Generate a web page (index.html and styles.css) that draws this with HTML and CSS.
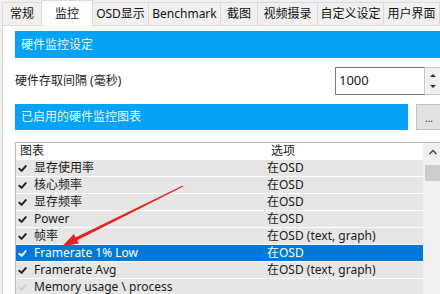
FILE: index.html
```html
<!DOCTYPE html>
<html>
<head>
<meta charset="utf-8">
<link rel="stylesheet" href="styles.css">
</head>
<body>
<div class="win">
  <div class="tabs">
    <div class="tab t1">常规</div>
    <div class="tab sel t2">监控</div>
    <div class="tab t3">OSD显示</div>
    <div class="tab t4">Benchmark</div>
    <div class="tab t5">截图</div>
    <div class="tab t6">视频摄录</div>
    <div class="tab t7">自定义设定</div>
    <div class="tab t8">用户界面</div>
  </div>
  <div class="panel">
    <div class="bar bar1">硬件监控设定</div>
    <div class="row-interval">
      <span class="label">硬件存取间隔 (毫秒)</span>
      <div class="spin">
        <div class="input">1000</div>
        <div class="spinbtns">
          <svg width="10" height="24" viewBox="0 0 10 24"><path d="M2 8 L5 5 L8 8 Z" fill="#333"/><path d="M2 16 L5 19 L8 16 Z" fill="#333"/></svg>
        </div>
      </div>
    </div>
    <div class="row-bar2">
      <div class="bar bar2">已启用的硬件监控图表</div>
      <div class="dots">...</div>
    </div>
    <div class="list">
      <div class="items">
        <div class="hdr"><span class="c1">图表</span><span class="c2">选项</span></div>
        <div class="item"><span class="c1"><svg class="ck" viewBox="0 0 10 10"><path d="M1.5 5.2 L4 7.6 L8.6 2.4" /></svg>显存使用率</span><span class="c2">在OSD</span></div>
        <div class="item"><span class="c1"><svg class="ck" viewBox="0 0 10 10"><path d="M1.5 5.2 L4 7.6 L8.6 2.4" /></svg>核心频率</span><span class="c2">在OSD</span></div>
        <div class="item"><span class="c1"><svg class="ck" viewBox="0 0 10 10"><path d="M1.5 5.2 L4 7.6 L8.6 2.4" /></svg>显存频率</span><span class="c2">在OSD</span></div>
        <div class="item"><span class="c1"><svg class="ck" viewBox="0 0 10 10"><path d="M1.5 5.2 L4 7.6 L8.6 2.4" /></svg>Power</span><span class="c2">在OSD</span></div>
        <div class="item"><span class="c1"><svg class="ck" viewBox="0 0 10 10"><path d="M1.5 5.2 L4 7.6 L8.6 2.4" /></svg>帧率</span><span class="c2">在OSD (text, graph)</span></div>
        <div class="item selrow"><span class="c1"><svg class="ck" viewBox="0 0 10 10"><path d="M1.5 5.2 L4 7.6 L8.6 2.4" /></svg>Framerate 1% Low</span><span class="c2">在OSD</span></div>
        <div class="item"><span class="c1"><svg class="ck" viewBox="0 0 10 10"><path d="M1.5 5.2 L4 7.6 L8.6 2.4" /></svg>Framerate Avg</span><span class="c2">在OSD (text, graph)</span></div>
        <div class="item off"><span class="c1"><svg class="ck" viewBox="0 0 10 10"><path d="M1.5 5.2 L4 7.6 L8.6 2.4" /></svg>Memory usage \ process</span><span class="c2"></span></div>
      </div>
      <div class="scroll">
        <svg class="up" width="10" height="8" viewBox="0 0 10 8"><path d="M1.5 6 L5 2.5 L8.5 6" fill="none" stroke="#444" stroke-width="1.4"/></svg>
        <div class="thumb"></div>
      </div>
    </div>
  </div>
  <svg class="arrow" width="440" height="294" viewBox="0 0 440 294">
    <polygon points="183.3,186.5 77.2,240.3 78.8,243.6 62,246.5 73.9,234.1 75.5,237.4 182.8,185.5" fill="#e3231b"/>
  </svg>
</div>
</body>
</html>
```
FILE: styles.css
```css
html, body {
  margin: 0;
  padding: 0;
}
body {
  width: 440px;
  height: 294px;
  overflow: hidden;
  background: #f0f0f0;
  font-family: "Noto Sans", "Noto Sans CJK SC", sans-serif;
  font-size: 12px;
  color: #1a1a1a;
}
.win {
  position: relative;
  width: 440px;
  height: 294px;
  overflow: hidden;
}
.tabs {
  display: flex;
  height: 25px;
  padding-left: 2px;
  align-items: flex-end;
  background: #f0f0f0;
}
.tab {
  height: 23px;
  line-height: 21px;
  box-sizing: border-box;
  border: 1px solid #dadada;
  border-bottom: none;
  border-left: none;
  background: #f0f0f0;
  text-align: center;
  white-space: nowrap;
  color: #111;
}
.t1 { width: 40px; border-left: 1px solid #dadada; }
.t2 { width: 50px; }
.t3 { width: 56px; }
.t4 { width: 72px; }
.t5 { width: 37px; }
.t6 { width: 60px; }
.t7 { width: 66px; }
.t8 { width: 56px; }
.tab.sel {
  height: 27px;
  line-height: 25px;
  background: #fff;
  margin-bottom: -2px;
  position: relative;
  z-index: 1;
  margin-left: -1px;
  border-left: 1px solid #dadada;
  width: 52px;
}
.panel {
  background: #fff;
  margin-left: 2px;
  border-left: 1px solid #dadada;
  border-top: 1px solid #dadada;
  padding: 5px 0 0 12px;
  height: 300px;
  box-sizing: border-box;
  width: 460px;
}
.bar {
  background: #04a3f6;
  color: #eaf6ff;
  height: 27px;
  line-height: 27px;
  padding-left: 6px;
  box-sizing: border-box;
}
.row-interval {
  display: flex;
  align-items: flex-start;
  margin-top: 9px;
  height: 28px;
}
.label {
  width: 320px;
  padding-top: 4px;
}
.spin {
  display: flex;
  height: 28px;
}
.input {
  width: 90px;
  box-sizing: border-box;
  border: 1px solid #7a7a7a;
  border-right: 1px solid #c8c8c8;
  padding: 3px 0 0 3px;
  font-size: 13px;
  background: #fff;
}
.spinbtns {
  width: 16px;
  border: 1px solid #c8c8c8;
  border-left: none;
  background: #f0f0f0;
  display: flex;
  justify-content: center;
  align-items: center;
}
.row-bar2 {
  display: flex;
  margin-top: 9px;
  height: 26px;
}
.bar2 {
  width: 393px;
  height: 26px;
  line-height: 26px;
}
.dots {
  margin-left: 8px;
  width: 26px;
  height: 26px;
  box-sizing: border-box;
  background: #e1e1e1;
  border: 1px solid #c2c2c2;
  text-align: center;
  line-height: 26px;
  font-size: 10px;
  color: #333;
}
.list {
  margin-top: 12px;
  display: flex;
  border-top: 1px solid #bbb;
  border-left: 1px solid #bbb;
  height: 160px;
}
.items {
  width: 407px;
  display: flex;
  flex-direction: column;
}
.hdr {
  display: flex;
  height: 16px;
  line-height: 16px;
  background: #fff;
}
.hdr .c1 { padding-left: 4px; }
.item {
  display: flex;
  height: 16px;
  line-height: 16px;
  background: #e6e6e6;
  margin-top: 1px;
  font-size: 12px;
}
.c1 {
  width: 250px;
  display: flex;
  align-items: center;
  white-space: nowrap;
}
.c2 {
  padding-left: 1px;
  white-space: nowrap;
}
.ck {
  width: 9px;
  height: 9px;
  margin: 0 7px 0 2px;
  fill: none;
  stroke: #222;
  stroke-width: 2.2;
  stroke-linecap: round;
  stroke-linejoin: round;
}
.selrow {
  background: #0078d7;
  color: #fff;
}
.selrow .ck { stroke: #fff; }
.off .ck { stroke: #cfcfcf; }
.scroll {
  width: 20px;
  background: #f0f0f0;
  display: flex;
  flex-direction: column;
  align-items: center;
}
.up {
  margin-top: 5px;
}
.thumb {
  margin-top: 9px;
  width: 17px;
  height: 16px;
  background: #cdcdcd;
}
.arrow {
  position: absolute;
  left: 0;
  top: 0;
  pointer-events: none;
}
```
